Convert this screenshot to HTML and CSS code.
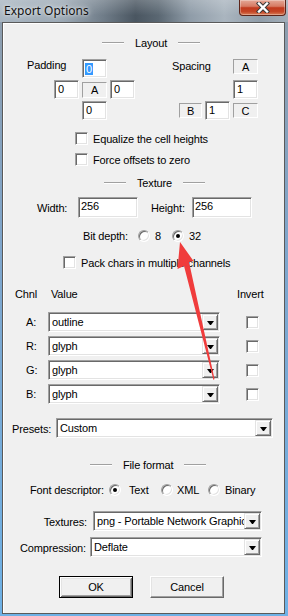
FILE: index.html
```html
<!DOCTYPE html>
<html lang="en">
<head>
  <meta charset="UTF-8" />
  <meta name="viewport" content="width=device-width, initial-scale=1.0" />
  <title>Export Options</title>
  <link rel="stylesheet" href="styles.css">
</head>
<body>
  <div class="window">
    <div class="titlebar">
      <span class="title">Export Options</span>
      <div class="close-btn">
        <svg width="14" height="11" viewBox="0 0 14 11">
          <path d="M3 1.5 L11 9.5 M11 1.5 L3 9.5" stroke="#3a3a3a" stroke-width="4.4" stroke-linecap="square" />
          <path d="M3 1.5 L11 9.5 M11 1.5 L3 9.5" stroke="#fff" stroke-width="2.4" stroke-linecap="square" />
        </svg>
      </div>
    </div>

    <div class="client">
      <div class="group-title gt-layout"><span class="etch"></span><span>Layout</span><span class="etch"></span></div>

      <div class="layout-row">
        <div class="spin">
          <span class="spin-label pad-label">Padding</span>
          <div class="edit c2 r1"><span class="sel">0</span></div>
          <div class="edit c1 r2">0</div>
          <div class="static c2 r2">A</div>
          <div class="edit c3 r2">0</div>
          <div class="edit c2 r3">0</div>
        </div>
        <div class="spin">
          <span class="spin-label sp-label">Spacing</span>
          <div class="static c3 r1 top">A</div>
          <div class="edit c3 r2">1</div>
          <div class="static c1 r3 narrow">B</div>
          <div class="edit c2 r3">1</div>
          <div class="static c3 r3">C</div>
        </div>
      </div>

      <div class="check-row row-equalize"><span class="check"></span><span>Equalize the cell heights</span></div>
      <div class="check-row row-force"><span class="check"></span><span>Force offsets to zero</span></div>

      <div class="group-title gt-texture"><span class="etch"></span><span>Texture</span><span class="etch"></span></div>

      <div class="size-row">
        <span class="size-label">Width:</span>
        <div class="edit size-edit">256</div>
        <span class="size-label second">Height:</span>
        <div class="edit size-edit">256</div>
      </div>

      <div class="depth-row">
        <span class="depth-label">Bit depth:</span>
        <span class="radio"></span><span class="opt opt-8">8</span>
        <span class="radio on"></span><span class="opt">32</span>
      </div>

      <div class="check-row row-pack"><span class="check"></span><span>Pack chars in multiple channels</span></div>

      <div class="chan-head">
        <span class="head-chnl">Chnl</span>
        <span class="head-value">Value</span>
        <span>Invert</span>
      </div>

      <div class="channels">
        <div class="chan-row">
          <span class="chan-label">A:</span>
          <div class="combo chan-combo"><span class="combo-text">outline</span><span class="drop"></span></div>
          <span class="check"></span>
        </div>
        <div class="chan-row">
          <span class="chan-label">R:</span>
          <div class="combo chan-combo"><span class="combo-text">glyph</span><span class="drop"></span></div>
          <span class="check"></span>
        </div>
        <div class="chan-row">
          <span class="chan-label">G:</span>
          <div class="combo chan-combo"><span class="combo-text">glyph</span><span class="drop"></span></div>
          <span class="check"></span>
        </div>
        <div class="chan-row">
          <span class="chan-label">B:</span>
          <div class="combo chan-combo"><span class="combo-text">glyph</span><span class="drop"></span></div>
          <span class="check"></span>
        </div>
      </div>

      <div class="presets-row">
        <span class="presets-label">Presets:</span>
        <div class="combo presets-combo"><span class="combo-text">Custom</span><span class="drop"></span></div>
      </div>

      <div class="group-title gt-file"><span class="etch"></span><span>File format</span><span class="etch"></span></div>

      <div class="desc-row">
        <span class="desc-label">Font descriptor:</span>
        <span class="radio on"></span><span class="opt opt-text">Text</span>
        <span class="radio"></span><span class="opt opt-xml">XML</span>
        <span class="radio"></span><span class="opt">Binary</span>
      </div>

      <div class="form-row row-textures">
        <span class="form-label tex-label">Textures:</span>
        <div class="combo tex-combo"><span class="combo-text">png - Portable Network Graphics</span><span class="drop"></span></div>
      </div>
      <div class="form-row row-compression">
        <span class="form-label comp-label">Compression:</span>
        <div class="combo comp-combo"><span class="combo-text">Deflate</span><span class="drop"></span></div>
      </div>

      <div class="buttons">
        <div class="btn default">OK</div>
        <div class="btn">Cancel</div>
      </div>
    </div>
  </div>

  <svg class="annotation" width="288" height="616" viewBox="0 0 288 616">
    <polygon points="180,242 193.5,261 189,262 214.5,379 213.5,380 184,266 177.5,269" fill="#f03c3c" />
  </svg>
</body>
</html>
```

FILE: styles.css
```css
* {
  box-sizing: border-box;
  margin: 0;
  padding: 0;
}
body {
  width: 288px;
  height: 616px;
  overflow: hidden;
  position: relative;
  background: linear-gradient(to bottom, #8f9dab 0%, #7fa6cc 40%, #6eb1e6 100%);
  font-family: 'Liberation Sans', Arial, sans-serif;
  font-size: 11px;
  letter-spacing: -0.15px;
  color: #000;
}
.window {
  height: 616px;
  display: flex;
  flex-direction: column;
}
.titlebar {
  height: 22px;
  display: flex;
  justify-content: space-between;
  align-items: flex-start;
  background:
    linear-gradient(to bottom, rgba(255, 255, 255, 0.2), rgba(255, 255, 255, 0) 70%),
    linear-gradient(to right, #a9b6c1 0%, #9aa7b3 22%, #6f7c88 36%, #4a5661 47%, #5a6772 55%, #8f9ca8 66%, #aab5bf 78%, #909da9 90%, #a3afba 100%);
}
.title {
  font-family: 'Noto Sans', 'Open Sans', sans-serif;
  font-size: 12px;
  letter-spacing: 0;
  line-height: 22px;
  padding-left: 4px;
  color: #111;
  text-shadow: 0 0 6px rgba(255, 255, 255, 0.9), 0 0 3px rgba(255, 255, 255, 0.6);
}
.close-btn {
  width: 47px;
  height: 16px;
  margin-right: 2px;
  border: 1px solid #5c2419;
  border-top: none;
  border-radius: 0 0 4px 4px;
  background: linear-gradient(to bottom, #e4a897 0%, #d67a63 42%, #c1391d 52%, #c44627 78%, #d9805a 100%);
  box-shadow: inset 0 0 0 1px rgba(255, 255, 255, 0.3);
  display: flex;
  align-items: center;
  justify-content: center;
}
.client {
  height: 592px;
  margin: 0 3px 0 2px;
  border: 1px solid #5a5a5a;
  box-shadow: inset 1px 1px #fff;
  background-color: #f0f0f0;
  display: flex;
  flex-direction: column;
}

/* group captions */
.group-title {
  height: 14px;
  display: flex;
  align-items: center;
  gap: 11px;
  line-height: 14px;
}
.etch {
  width: 22px;
  height: 2px;
  border-top: 1px solid #a0a0a0;
  border-bottom: 1px solid #fff;
}
.gt-layout { margin-top: 13px; padding-left: 99px; }
.gt-texture { margin-top: 10px; padding-left: 101px; }
.gt-file { margin-top: 20px; padding-left: 87px; }

/* sunken controls */
.edit, .combo, .check, .radio {
  background-color: #fff;
  border: 1px solid;
  border-color: #a0a0a0 #fff #fff #a0a0a0;
  box-shadow: inset 1px 1px #696969, inset -1px -1px #e3e3e3;
}
.edit {
  height: 19px;
  padding-left: 3px;
  line-height: 17px;
  white-space: nowrap;
  overflow: hidden;
}
.sel {
  display: inline-block;
  background-color: #3399ff;
  color: #fff;
  line-height: 12px;
  padding: 0 1px;
  margin-left: -1px;
  vertical-align: middle;
}
.static {
  height: 16px;
  align-self: center;
  border: 1px solid;
  border-color: #a0a0a0 #fff #fff #a0a0a0;
  display: flex;
  align-items: center;
  justify-content: center;
}
.check {
  width: 13px;
  height: 13px;
  flex: none;
}
.radio {
  width: 12px;
  height: 12px;
  border-radius: 50%;
  flex: none;
  display: flex;
  align-items: center;
  justify-content: center;
}
.radio.on::after {
  content: "";
  width: 4px;
  height: 4px;
  border-radius: 50%;
  background-color: #000;
}

/* padding / spacing */
.layout-row {
  margin-top: 9px;
  display: flex;
  gap: 42px;
  padding-left: 51px;
}
.spin {
  display: grid;
  grid-template-columns: repeat(3, 25px);
  grid-template-rows: repeat(3, 19px);
  column-gap: 3px;
  row-gap: 2px;
}
.spin-label {
  grid-row: 1;
  grid-column: 1 / 3;
  line-height: 13px;
  white-space: nowrap;
}
.pad-label { margin-left: -27px; margin-top: 0; }
.sp-label { margin-left: -5px; margin-top: 1px; }
.c1 { grid-column: 1; }
.c2 { grid-column: 2; }
.c3 { grid-column: 3; }
.r1 { grid-row: 1; }
.r2 { grid-row: 2; }
.r3 { grid-row: 3; }
.static.top { align-self: start; height: 15px; }
.static.narrow { height: 15px; margin-left: 2px; }
.static.r3 { height: 15px; }

/* check rows */
.check-row {
  height: 13px;
  display: flex;
  align-items: center;
  gap: 5px;
  white-space: nowrap;
}
.row-equalize { margin-top: 12px; padding-left: 72px; }
.row-force { margin-top: 8px; padding-left: 72px; }
.row-pack { margin-top: 14px; padding-left: 60px; }

/* width / height */
.size-row {
  margin-top: 7px;
  height: 21px;
  display: flex;
  align-items: center;
  padding-left: 34px;
}
.size-label {
  width: 41px;
  padding-top: 1px;
}
.size-label.second {
  margin-left: 13px;
}
.size-edit {
  width: 60px;
  height: 21px;
  line-height: 17px;
  padding-left: 2px;
}

/* bit depth */
.depth-row {
  margin-top: 11px;
  height: 13px;
  display: flex;
  align-items: center;
  padding-left: 80px;
}
.depth-label { width: 55px; }
.opt { padding-left: 5px; }
.opt-8 { width: 22px; }

/* channels */
.chan-head {
  margin-top: 18px;
  height: 14px;
  display: flex;
  align-items: center;
  padding-left: 12px;
}
.head-chnl { width: 36px; }
.head-value { width: 186px; }
.channels {
  margin-top: 11px;
  display: flex;
  flex-direction: column;
  gap: 4px;
}
.chan-row {
  height: 20px;
  display: flex;
  align-items: center;
  padding-left: 20px;
}
.chan-label { width: 25px; padding-left: 3px; }
.chan-combo { width: 172px; margin-right: 26px; }

.combo {
  height: 20px;
  padding: 1px;
  display: flex;
  align-items: center;
}
.combo-text {
  flex: 1;
  overflow: hidden;
  white-space: nowrap;
  padding-left: 2px;
  line-height: 16px;
}
.drop {
  width: 16px;
  height: 16px;
  flex: none;
  background-color: #f0f0f0;
  border: 1px solid;
  border-color: #e3e3e3 #696969 #696969 #e3e3e3;
  box-shadow: inset 1px 1px #fff, inset -1px -1px #a0a0a0;
  display: flex;
  align-items: center;
  justify-content: center;
}
.drop::after {
  content: "";
  width: 1px;
  border-top: 4px solid #000;
  border-left: 3px solid transparent;
  border-right: 3px solid transparent;
  margin-top: 1px;
}

.presets-row {
  margin-top: 14px;
  height: 20px;
  display: flex;
  align-items: center;
  padding-left: 9px;
}
.presets-label { width: 44px; padding-top: 2px; }
.presets-combo { width: 217px; }

/* file format */
.desc-row {
  margin-top: 11px;
  height: 13px;
  display: flex;
  align-items: center;
  padding-left: 27px;
}
.desc-label { width: 79px; }
.opt-text { width: 40px; padding-left: 8px; }
.opt-xml { width: 35px; padding-left: 4px; }

.form-row {
  height: 20px;
  display: flex;
  align-items: center;
}
.row-textures { margin-top: 15px; }
.row-compression { margin-top: 6px; }
.form-label {
  text-align: right;
  padding-top: 2px;
}
.tex-label { width: 84px; margin-right: 6px; }
.comp-label { width: 83px; margin-right: 4px; }
.tex-combo { width: 169px; }
.comp-combo { width: 172px; }

/* buttons */
.buttons {
  margin-top: 19px;
  display: flex;
  gap: 17px;
  padding-left: 56px;
}
.btn {
  width: 74px;
  height: 22px;
  background-color: #f0f0f0;
  border: 1px solid;
  border-color: #fff #696969 #696969 #fff;
  box-shadow: inset -1px -1px #a0a0a0, inset 1px 1px #e3e3e3;
  display: flex;
  align-items: center;
  justify-content: center;
}
.btn.default {
  border-color: #000;
  box-shadow: inset 1px 1px #fff, inset -1px -1px #696969, inset 2px 2px #e3e3e3, inset -2px -2px #a0a0a0;
}

.annotation {
  position: absolute;
  left: 0;
  top: 0;
  pointer-events: none;
}
```
